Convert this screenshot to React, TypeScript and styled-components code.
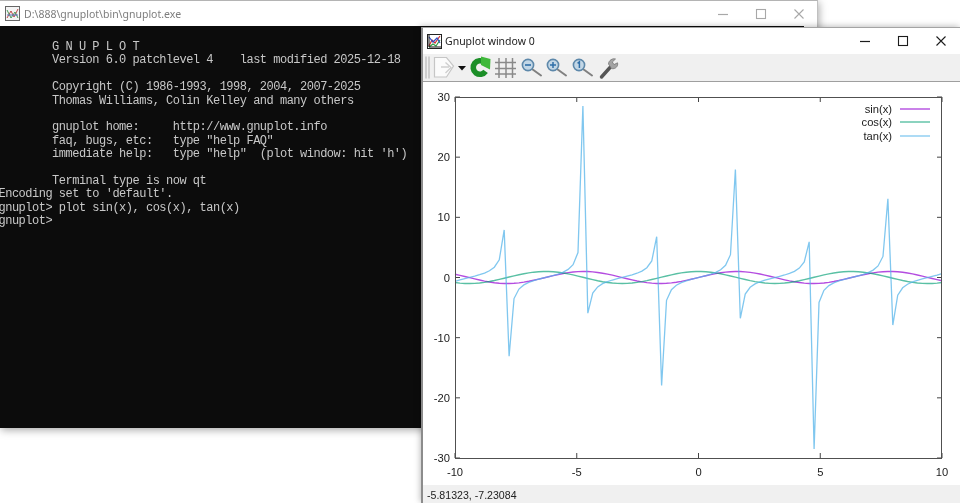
import React from "react";
import styled, { createGlobalStyle } from "styled-components";

const Global = createGlobalStyle`
  html, body { margin: 0; padding: 0; background: #fff; overflow: hidden; }
  #root { width: 960px; height: 503px; }
`;

const Desktop = styled.div`
  position: relative;
  width: 960px;
  height: 503px;
  overflow: hidden;
  background: #fff;
  filter: blur(0.4px);
`;

const ConsoleWindow = styled.section`
  position: absolute;
  left: 0;
  top: 0;
  width: 818px;
  height: 428px;
  display: flex;
  flex-direction: column;
  box-sizing: border-box;
  background: #fff;
  border-top: 1px solid #b4b4b4;
  border-right: 1px solid #c0c0c0;
  box-shadow: 1px 2px 8px rgba(0, 0, 0, 0.35);
`;

const PlotWindow = styled.section`
  position: absolute;
  left: 421px;
  top: 27px;
  width: 539px;
  height: 476px;
  display: flex;
  flex-direction: column;
  box-sizing: border-box;
  background: #fff;
  border-top: 1px solid #a4a4a4;
  border-left: 2px solid #8c8c8c;
  box-shadow: -1px -1px 6px rgba(0, 0, 0, 0.25);
`;

const TitleBar = styled.header<{ $h: number; $pad: number; $gap: number }>`
  height: ${(p) => p.$h}px;
  flex: none;
  display: flex;
  align-items: center;
  gap: ${(p) => p.$gap}px;
  padding-left: ${(p) => p.$pad}px;
  background: #fff;
`;

const TitleText = styled.span<{ $dim?: boolean }>`
  font: 10.5px "Noto Sans", "Open Sans", sans-serif;
  color: ${(p) => (p.$dim ? "#7d7d7d" : "#222")};
  white-space: pre;
`;

const WinButtons = styled.div<{ $color: string; $right: number }>`
  margin-left: auto;
  margin-right: ${(p) => p.$right}px;
  width: 88px;
  display: flex;
  justify-content: space-between;
  align-items: center;
  color: ${(p) => p.$color};
  svg { display: block; }
`;

const ConsoleBody = styled.div`
  flex: 1;
  min-height: 0;
  display: flex;
`;

const Terminal = styled.div`
  flex: 1;
  background: #0c0c0c;
  overflow: hidden;
`;

const TerminalText = styled.pre`
  margin: 0 0 0 -1.5px;
  padding: 15px 0 0;
  color: #c8c8c8;
  font: 12px/13.4px "Liberation Mono", monospace;
  letter-spacing: -0.5px;
`;

const ScrollGutter = styled.div`
  width: 13px;
  flex: none;
  background: #fff;
`;

const Toolbar = styled.div`
  height: 28px;
  flex: none;
  box-sizing: border-box;
  border-bottom: 1px solid #9f9f9f;
  background: #f0f0f0;
  display: flex;
  align-items: center;
`;

const ToolbarArt = styled.svg`
  display: block;
  flex: none;
`;

const PlotArea = styled.div`
  flex: 1;
  min-height: 0;
  background: #fff;
`;

const PlotSvg = styled.svg`
  display: block;
`;

const StatusBar = styled.footer`
  height: 18px;
  flex: none;
  display: flex;
  align-items: center;
  padding-left: 4px;
  padding-top: 1px;
  box-sizing: border-box;
  background: #f0f0f0;
  font: 10.6px "Liberation Sans", Arial, sans-serif;
  color: #222;
`;

const AxisLabel = styled.text`
  font: 11.2px "Liberation Sans", Arial, sans-serif;
  fill: #1c1c1c;
`;

const consoleText = `        G N U P L O T
        Version 6.0 patchlevel 4    last modified 2025-12-18

        Copyright (C) 1986-1993, 1998, 2004, 2007-2025
        Thomas Williams, Colin Kelley and many others

        gnuplot home:     http://www.gnuplot.info
        faq, bugs, etc:   type "help FAQ"
        immediate help:   type "help"  (plot window: hit 'h')

        Terminal type is now qt
Encoding set to 'default'.
gnuplot> plot sin(x), cos(x), tan(x)
gnuplot>`;

// Plot coordinates: the plot svg starts at page (423, 82).
const OX = 423;
const OY = 82;
const L = 455 - OX;
const R = 942 - OX;
const T = 97 - OY;
const B = 458 - OY;
const sx = (x: number) => L + ((x + 10) / 20) * (R - L);
const sy = (y: number) => T + ((30 - y) / 60) * (B - T);

const sample = (fn: (x: number) => number) => {
  const pts: string[] = [];
  for (let i = 0; i < 100; i++) {
    const x = -10 + (i * 20) / 99;
    pts.push(`${sx(x).toFixed(2)},${sy(fn(x)).toFixed(2)}`);
  }
  return pts.join(" ");
};

const curves = [
  { name: "sin(x)", color: "#9400d3", width: 1.4, opacity: 0.7, fn: Math.sin, y: 109 },
  { name: "cos(x)", color: "#009e73", width: 1.4, opacity: 0.65, fn: Math.cos, y: 122 },
  { name: "tan(x)", color: "#56b4e9", width: 1.3, opacity: 0.75, fn: Math.tan, y: 136 },
];

const xTicks = [-10, -5, 0, 5, 10];
const yTicks = [-30, -20, -10, 0, 10, 20, 30];

const Plot = () => (
  <PlotSvg width={537} height={403} viewBox="0 0 537 403">
    <g stroke="#444" strokeWidth={1}>
      {xTicks.map((v) => (
        <g key={v}>
          <line x1={sx(v)} x2={sx(v)} y1={T} y2={T + 5} />
          <line x1={sx(v)} x2={sx(v)} y1={B} y2={B - 5} />
        </g>
      ))}
      {yTicks.map((v) => (
        <g key={v}>
          <line x1={L} x2={L + 5} y1={sy(v)} y2={sy(v)} />
          <line x1={R} x2={R - 5} y1={sy(v)} y2={sy(v)} />
        </g>
      ))}
    </g>
    {yTicks.map((v) => (
      <AxisLabel key={v} x={L - 5} y={sy(v) + 4} textAnchor="end">
        {v}
      </AxisLabel>
    ))}
    {xTicks.map((v) => (
      <AxisLabel key={v} x={sx(v)} y={B + 18} textAnchor="middle">
        {v}
      </AxisLabel>
    ))}
    {curves.map((c) => (
      <polyline
        key={c.name}
        points={sample(c.fn)}
        fill="none"
        stroke={c.color}
        strokeWidth={c.width}
        strokeOpacity={c.opacity}
        strokeLinejoin="miter"
      />
    ))}
    <rect x={L + 0.5} y={T + 0.5} width={R - L - 1} height={B - T} fill="none" stroke="#505050" strokeWidth={1} />
    {curves.map((c) => (
      <g key={c.name}>
        <AxisLabel x={892 - OX} y={c.y - OY + 4} textAnchor="end">
          {c.name}
        </AxisLabel>
        <line x1={900 - OX} x2={930 - OX} y1={c.y - OY} y2={c.y - OY} stroke={c.color} strokeOpacity={c.opacity} strokeWidth={c.width} />
      </g>
    ))}
  </PlotSvg>
);

const ConsoleIcon = () => (
  <svg width={15} height={15} viewBox="0 0 15 15">
    <rect x={0.5} y={0.5} width={14} height={14} fill="#f4f4f4" stroke="#666" />
    <path d="M2 12 L6 5 L9 11 L13 3" fill="none" stroke="#c04848" />
    <path d="M2 4 L6 12 L10 6 L13 12" fill="none" stroke="#4a9a58" />
    <path d="M2 9 H13" stroke="#5a70c0" />
  </svg>
);

const PlotIcon = () => (
  <svg width={15} height={15} viewBox="0 0 15 15">
    <rect x={0.5} y={0.5} width={14} height={14} fill="#fff" stroke="#222" />
    <path d="M2 12 L5 6 L8 9 L13 2" fill="none" stroke="#d03030" strokeWidth={1.2} />
    <path d="M2 13 L6 10 L9 12 L13 6" fill="none" stroke="#2a9a40" strokeWidth={1.2} />
    <path d="M2 3 L6 8 L10 4 L13 9" fill="none" stroke="#3050c8" strokeWidth={1.2} />
    <path d="M2 1 V13 H14" fill="none" stroke="#111" />
  </svg>
);

const Controls = () => (
  <>
    <svg width={12} height={12} viewBox="0 0 12 12">
      <path d="M1 6.5 H11" stroke="currentColor" strokeWidth={1.2} />
    </svg>
    <svg width={12} height={12} viewBox="0 0 12 12">
      <rect x={1.5} y={1.5} width={9} height={9} fill="none" stroke="currentColor" strokeWidth={1.1} />
    </svg>
    <svg width={12} height={12} viewBox="0 0 12 12">
      <path d="M1.5 1.5 L10.5 10.5 M10.5 1.5 L1.5 10.5" stroke="currentColor" strokeWidth={1.1} />
    </svg>
  </>
);

const Magnifier = ({ cx, kind }: { cx: number; kind: "minus" | "plus" | "one" }) => (
  <g transform={`translate(${cx} 11)`}>
    <line x1={4} y1={4} x2={13} y2={10.5} stroke="#808080" strokeWidth={2} strokeLinecap="round" />
    <circle cx={0} cy={0} r={5.6} fill="#c3d7e6" stroke="#5d88aa" strokeWidth={1.6} />
    {kind === "minus" && <path d="M-3 0 H3" stroke="#2f6fa8" strokeWidth={1.6} />}
    {kind === "plus" && <path d="M-3 0 H3 M0 -3 V3" stroke="#2f6fa8" strokeWidth={1.5} />}
    {kind === "one" && <path d="M-1.4 -1.6 L0.4 -3.2 V3" fill="none" stroke="#2f6fa8" strokeWidth={1.5} />}
  </g>
);

const ToolbarIcons = () => (
  <ToolbarArt width={210} height={27} viewBox="0 0 210 27">
    {/* grip */}
    <path d="M3 2.5 V24.5 M6 2.5 V24.5" stroke="#c6c6c6" strokeWidth={1.6} />
    {/* export document */}
    <path d="M11.5 3.5 H23.5 L30.5 12 L23.5 23 H11.5 Z" fill="#fbfbfb" stroke="#c6c6c6" strokeWidth={1.2} />
    <path d="M18 13 H26 M22.5 8.5 L28 13.5 L22.5 19" fill="none" stroke="#cfcfcf" strokeWidth={1.4} />
    {/* dropdown */}
    <path d="M35 12 H43 L39 16.5 Z" fill="#111" />
    {/* reload */}
    <path d="M62.6 17.4 A6.8 6.8 0 1 1 61.4 8.3" fill="none" stroke="#1c8f28" strokeWidth={5.6} />
    <path d="M58 2.5 L67.5 5 L67 15.5 L58 11 Z" fill="#3fb83a" />
    {/* grid */}
    <path d="M76 4 V24 M83 4 V24 M89.5 4 V24 M72 8.5 H93 M72 14.5 H93 M72 20 H93" stroke="#8a8a8a" strokeWidth={1.5} />
    <Magnifier cx={105} kind="minus" />
    <Magnifier cx={130} kind="plus" />
    <Magnifier cx={156} kind="one" />
    {/* wrench */}
    <path d="M178.5 23 L187 13.5" stroke="#555" strokeWidth={3.4} strokeLinecap="round" />
    <path d="M185.5 10 C185.5 6.5 189.5 4 192.5 5 L189.3 8 L191 10.6 L194.5 8.8 C195.5 12 192.5 15.5 188.5 14.6 Z" fill="#a4a4a4" stroke="#777" strokeWidth={0.8} />
  </ToolbarArt>
);

export default function App() {
  return (
    <>
      <Global />
      <Desktop>
        <ConsoleWindow>
          <TitleBar $h={25} $pad={5} $gap={4}>
            <ConsoleIcon />
            <TitleText $dim>D:\888\gnuplot\bin\gnuplot.exe</TitleText>
            <WinButtons $color="#a8a8a8" $right={12}>
              <Controls />
            </WinButtons>
          </TitleBar>
          <ConsoleBody>
            <Terminal>
              <TerminalText>{consoleText}</TerminalText>
            </Terminal>
            <ScrollGutter />
          </ConsoleBody>
        </ConsoleWindow>
        <PlotWindow>
          <TitleBar $h={26} $pad={4} $gap={3}>
            <PlotIcon />
            <TitleText>Gnuplot window 0</TitleText>
            <WinButtons $color="#1c1c1c" $right={13}>
              <Controls />
            </WinButtons>
          </TitleBar>
          <Toolbar>
            <ToolbarIcons />
          </Toolbar>
          <PlotArea>
            <Plot />
          </PlotArea>
          <StatusBar>-5.81323, -7.23084</StatusBar>
        </PlotWindow>
      </Desktop>
    </>
  );
}
